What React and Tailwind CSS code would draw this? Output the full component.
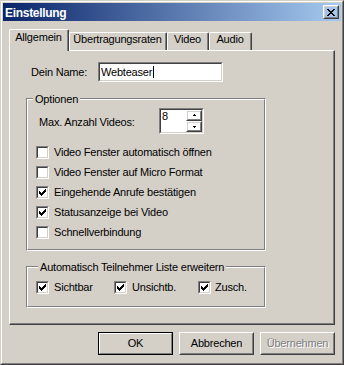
// App.jsx — classic Windows "Einstellung" dialog

const font = "font-['Liberation_Sans',Arial,sans-serif]";

// Sunken 13x13 checkbox
function Check({ checked }) {
  return (
    <span className="block w-[13px] h-[13px] shrink-0 border border-t-[#808080] border-l-[#808080] border-r-white border-b-white">
      <span className="block w-full h-full border border-t-[#404040] border-l-[#404040] border-r-[#d4d0c8] border-b-[#d4d0c8] bg-white">
        {checked && (
          <svg width="9" height="9" viewBox="0 0 9 9" shapeRendering="crispEdges" className="block">
            <rect x="7" y="1" width="1" height="1" fill="#000" />
            <rect x="6" y="2" width="2" height="1" fill="#000" />
            <rect x="1" y="3" width="1" height="1" fill="#000" />
            <rect x="5" y="3" width="3" height="1" fill="#000" />
            <rect x="1" y="4" width="2" height="1" fill="#000" />
            <rect x="4" y="4" width="3" height="1" fill="#000" />
            <rect x="1" y="5" width="5" height="1" fill="#000" />
            <rect x="2" y="6" width="3" height="1" fill="#000" />
            <rect x="3" y="7" width="1" height="1" fill="#000" />
          </svg>
        )}
      </span>
    </span>
  );
}

// Etched group box with a legend sitting on the top line
function Group({ label, labelLeft, className, children }) {
  return (
    <div className={`border border-t-[#808080] border-l-[#808080] border-r-white border-b-white ${className}`}>
      <div className="relative h-full border border-t-white border-l-white border-r-[#808080] border-b-[#808080]">
        <span className={`absolute top-[-7px] ${labelLeft} px-[2px] bg-[#d4d0c8] leading-[13px]`}>{label}</span>
        {children}
      </div>
    </div>
  );
}

function Button({ children, isDefault, disabled }) {
  const outer = isDefault
    ? 'border border-black'
    : 'border border-t-white border-l-white border-r-[#404040] border-b-[#404040]';
  const inner = isDefault
    ? 'border border-t-white border-l-white border-r-[#808080] border-b-[#808080]'
    : 'border border-t-[#d4d0c8] border-l-[#d4d0c8] border-r-[#808080] border-b-[#808080]';
  return (
    <div className={`w-[75px] h-[23px] ${outer}`}>
      <div className={`h-full flex items-center justify-center ${inner} ${disabled ? 'text-[#808080] [text-shadow:1px_1px_0_#fff]' : 'text-black'}`}>
        {children}
      </div>
    </div>
  );
}

function SpinArrow({ up }) {
  return (
    <svg width="5" height="3" viewBox="0 0 5 3" shapeRendering="crispEdges" className="block">
      {up ? (
        <>
          <rect x="2" y="0" width="1" height="1" fill="#000" />
          <rect x="1" y="1" width="3" height="1" fill="#000" />
        </>
      ) : (
        <>
          <rect x="1" y="1" width="3" height="1" fill="#000" />
          <rect x="2" y="2" width="1" height="1" fill="#000" />
        </>
      )}
    </svg>
  );
}

function SpinButton({ up, h }) {
  return (
    <div className={`${h} border border-t-white border-l-white border-r-[#404040] border-b-[#404040]`}>
      <div className="h-full flex items-center justify-center border border-t-[#d4d0c8] border-l-[#d4d0c8] border-r-[#808080] border-b-[#808080]">
        <SpinArrow up={up} />
      </div>
    </div>
  );
}

export default function App() {
  const tabs = [
    { label: 'Übertragungsraten', w: 'w-[98px]' },
    { label: 'Video', w: 'w-[42px]' },
    { label: 'Audio', w: 'w-[43px]' },
  ];

  const options = [
    { label: 'Video Fenster automatisch öffnen', checked: false },
    { label: 'Video Fenster auf Micro Format', checked: false },
    { label: 'Eingehende Anrufe bestätigen', checked: true },
    { label: 'Statusanzeige bei Video', checked: true },
    { label: 'Schnellverbindung', checked: false },
  ];

  return (
    <div className={`w-[344px] h-[365px] bg-[#d4d0c8] border border-t-[#d4d0c8] border-l-[#d4d0c8] border-r-[#404040] border-b-[#404040] text-[11px] leading-[13px] tracking-[-0.2px] text-black ${font}`}>
      <div className="h-full flex flex-col p-[1px] border border-t-white border-l-white border-r-[#808080] border-b-[#808080]">

        {/* Title bar */}
        <div className="h-[18px] flex items-start bg-[linear-gradient(to_right,#0a246a,#a6caf0)]">
          <span className="pl-[2px] pt-[1px] text-white font-bold text-[12px] leading-[18px] tracking-[-0.3px]">Einstellung</span>
          <div className="ml-auto mr-[2px] mt-[2px] w-[16px] h-[14px] border border-t-white border-l-white border-r-[#404040] border-b-[#404040]">
            <div className="h-full pl-[2px] pt-[2px] border border-t-[#d4d0c8] border-l-[#d4d0c8] border-r-[#808080] border-b-[#808080]">
              <svg width="8" height="7" viewBox="0 0 8 7" shapeRendering="crispEdges" className="block">
                <rect x="0" y="0" width="2" height="1" fill="#000" />
                <rect x="6" y="0" width="2" height="1" fill="#000" />
                <rect x="1" y="1" width="2" height="1" fill="#000" />
                <rect x="5" y="1" width="2" height="1" fill="#000" />
                <rect x="2" y="2" width="4" height="1" fill="#000" />
                <rect x="3" y="3" width="2" height="1" fill="#000" />
                <rect x="2" y="4" width="4" height="1" fill="#000" />
                <rect x="1" y="5" width="2" height="1" fill="#000" />
                <rect x="5" y="5" width="2" height="1" fill="#000" />
                <rect x="0" y="6" width="2" height="1" fill="#000" />
                <rect x="6" y="6" width="2" height="1" fill="#000" />
              </svg>
            </div>
          </div>
        </div>

        {/* Tabs */}
        <div className="mt-[8px] mx-[6px] flex flex-col">
          <div className="flex items-end">
            <div className="relative z-10 w-[60px] h-[22px] mb-[-1px] bg-[#d4d0c8] rounded-t-[2px] border-l border-t border-r border-l-white border-t-white border-r-[#404040]">
              <div className="h-full pt-[1px] text-center border-r border-r-[#808080]">Allgemein</div>
            </div>
            {tabs.map((t) => (
              <div key={t.label} className={`${t.w} h-[18px] rounded-t-[2px] border-l border-t border-r border-l-white border-t-white border-r-[#404040]`}>
                <div className="h-full text-center border-r border-r-[#808080]">{t.label}</div>
              </div>
            ))}
          </div>

          {/* Panel */}
          <div className="h-[275px] border border-t-white border-l-white border-r-[#404040] border-b-[#404040]">
            <div className="h-full pl-[16px] pt-[11px] flex flex-col border-r border-b border-r-[#808080] border-b-[#808080]">

              {/* Name */}
              <div className="ml-[5px] flex items-center">
                <span className="w-[67px]">Dein Name:</span>
                <div className="w-[125px] h-[20px] border border-t-[#808080] border-l-[#808080] border-r-white border-b-white">
                  <div className="h-full flex items-center pl-[1px] bg-white border border-t-[#404040] border-l-[#404040] border-r-[#d4d0c8] border-b-[#d4d0c8]">
                    <span>Webteaser</span>
                    <span className="w-[1px] h-[12px] bg-black ml-[1px]" />
                  </div>
                </div>
              </div>

              {/* Optionen */}
              <Group label="Optionen" labelLeft="left-[5px]" className="mt-[16px] w-[240px] h-[153px]">
                <div className="pt-[8px] flex flex-col">
                  <div className="pl-[11px] flex items-start">
                    <span className="w-[120px] mt-[8px]">Max. Anzahl Videos:</span>
                    <div className="w-[45px] h-[26px] border border-t-[#808080] border-l-[#808080] border-r-white border-b-white">
                      <div className="h-full flex bg-white border border-t-[#404040] border-l-[#404040] border-r-[#d4d0c8] border-b-[#d4d0c8]">
                        <span className="flex-1 pl-[1px]">8</span>
                        <div className="w-[16px] flex flex-col">
                          <SpinButton up h="h-[11px]" />
                          <SpinButton h="h-[11px]" />
                        </div>
                      </div>
                    </div>
                  </div>
                  <div className="mt-[12px] pl-[8px] flex flex-col gap-[7px]">
                    {options.map((o) => (
                      <div key={o.label} className="h-[13px] flex items-center">
                        <Check checked={o.checked} />
                        <span className="ml-[5px]">{o.label}</span>
                      </div>
                    ))}
                  </div>
                </div>
              </Group>

              {/* Teilnehmer Liste */}
              <Group label="Automatisch Teilnehmer Liste erweitern" labelLeft="left-[10px]" className="mt-[15px] w-[240px] h-[42px]">
                <div className="pt-[13px] pl-[8px] flex items-center">
                  <div className="w-[78px] flex items-center">
                    <Check checked />
                    <span className="ml-[5px]">Sichtbar</span>
                  </div>
                  <div className="w-[84px] flex items-center">
                    <Check checked />
                    <span className="ml-[5px]">Unsichtb.</span>
                  </div>
                  <div className="flex items-center">
                    <Check checked />
                    <span className="ml-[4px]">Zusch.</span>
                  </div>
                </div>
              </Group>
            </div>
          </div>
        </div>

        {/* Buttons */}
        <div className="mt-[7px] mr-[6px] flex justify-end gap-[6px]">
          <Button isDefault>OK</Button>
          <Button>Abbrechen</Button>
          <Button disabled>Übernehmen</Button>
        </div>
      </div>
    </div>
  );
}
